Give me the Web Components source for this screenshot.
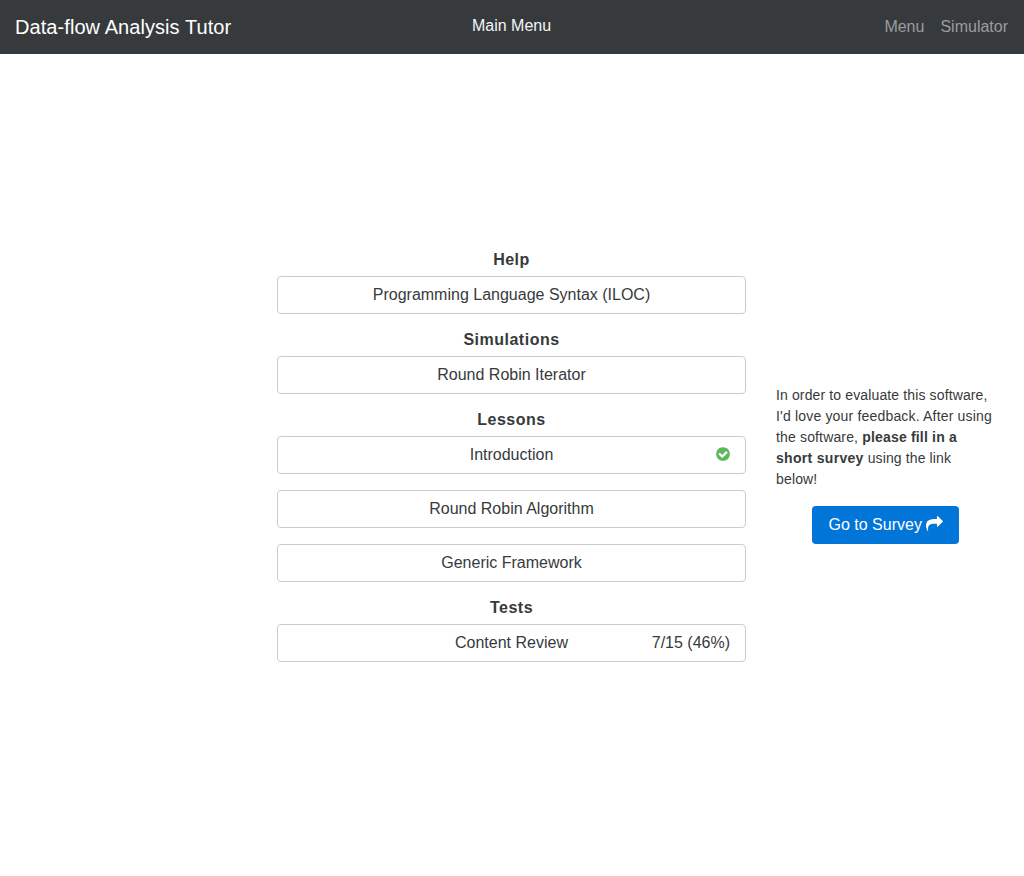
<!DOCTYPE html>
<html lang="en">
<head>
<meta charset="utf-8">
<title>Data-flow Analysis Tutor</title>
<style>
html, body { margin: 0; height: 100%; }
body { font: 16px/24px "Liberation Sans", Arial, sans-serif; color: #373a3c; background: #fff; overflow: hidden; }
</style>
</head>
<body>
<tutor-app></tutor-app>
<script>
const define = (name, html) => customElements.define(name, class extends HTMLElement {
  constructor() {
    super();
    const t = document.createElement('template');
    t.innerHTML = html;
    this.attachShadow({ mode: 'open' }).append(t.content.cloneNode(true));
  }
});

define('nav-bar', `
<style>
:host { display: grid; grid-template-columns: 1fr auto 1fr; box-sizing: border-box; height: 54px; padding: 0 16px 0 15px; background: #373a3c; color: #fff; }
.brand { font-size: 20px; line-height: 30px; padding-top: 12px; letter-spacing: .07px; }
.title { padding-top: 14px; color: #f4f5f5; }
.links { display: flex; gap: 16px; justify-content: flex-end; padding-top: 15px; color: #9b9c9d; }
</style>
<div class="brand"><slot name="brand"></slot></div>
<div class="title"><slot></slot></div>
<div class="links"><slot name="links"></slot></div>`);

define('menu-section', `
<style>
:host { display: block; }
h2 { font-size: 16px; line-height: 18px; margin: 0; padding: 1px 0 7px; text-align: center; font-weight: bold; letter-spacing: .5px; }
</style>
<h2><slot name="title"></slot></h2>
<slot></slot>`);

define('menu-item', `
<style>
:host { display: grid; grid-template-columns: 1fr auto 1fr; box-sizing: border-box; height: 38px; margin-bottom: 16px; padding: 6px 15px; border: 1px solid #ccc; border-radius: 4px; background: #fff; cursor: pointer; }
.label { grid-column: 2; white-space: nowrap; }
.status { grid-column: 3; justify-self: end; }
</style>
<span class="label"><slot></slot></span><span class="status"><slot name="status"></slot></span>`);

define('check-icon', `
<style>:host { display: block; height: 24px; color: #5cb85c; } svg { display: block; margin: 3.4px -1px 0 0; }</style>
<svg width="16" height="16" viewBox="0 0 1792 1792" fill="currentColor"><path d="M1412 734q0-28-18-46l-91-90q-19-19-45-19t-45 19l-408 407-226-226q-19-19-45-19t-45 19l-91 90q-18 18-18 46 0 27 18 45l362 362q19 19 45 19 27 0 46-19l543-543q18-18 18-45zm252 162q0 209-103 385.5t-279.5 279.5-385.5 103-385.5-103-279.5-279.5-103-385.5 103-385.5 279.5-279.5 385.5-103 385.5 103 279.5 279.5 103 385.5z"/></svg>`);

define('share-icon', `
<style>:host { display: block; } svg { display: block; }</style>
<svg width="17" height="15" viewBox="0 64 1792 1600" preserveAspectRatio="none" fill="currentColor"><path d="M1792 640q0 26-19 45l-512 512q-19 19-45 19t-45-19-19-45v-256h-224q-98 0-175.5 6t-154 21.5-133 42.5-105.5 69.5-80 101-48.5 138.5-17.5 181q0 55 5 123 0 6 2.5 23.5t2.5 26.5q0 15-8.5 25t-23.5 10q-16 0-28-17-7-9-13-22t-13.5-30-10.5-24q-127-285-127-451 0-199 53-333 162-403 875-403h224v-256q0-26 19-45t45-19 45 19l512 512q19 19 19 45z"/></svg>`);

define('survey-panel', `
<style>
:host { display: block; font-size: 14px; line-height: 21px; }
p { margin: 0 0 16px; white-space: nowrap; letter-spacing: .155px; }
.action { display: flex; justify-content: center; }
a { display: flex; gap: 4px; box-sizing: border-box; width: 147px; height: 38px; padding: 7px 0 7px 16.5px; border-radius: 4px; background: #0275d8; color: #fff; font-size: 16px; line-height: 24px; white-space: nowrap; }
share-icon { margin-top: 3.5px; }
</style>
<p><slot></slot></p>
<div class="action"><a><slot name="action"></slot><share-icon></share-icon></a></div>`);

define('tutor-app', `
<style>
:host { display: flex; flex-direction: column; height: 876px; }
main { flex: 1; display: grid; grid-template-columns: 277px 469px 219px; align-items: center; padding-bottom: 2px; }
.menu { grid-column: 2; }
survey-panel { grid-column: 3; margin-left: 30px; margin-right: -30px; }
.first { letter-spacing: .13px; }
.second { letter-spacing: .18px; }
b { letter-spacing: .18px; }
.lead b { letter-spacing: .3px; }
.lead { letter-spacing: .12px; }
[slot=action] { letter-spacing: 0; }
</style>
<nav-bar>
  <span slot="brand">Data-flow Analysis Tutor</span>
  <span>Main Menu</span>
  <span slot="links">Menu</span><span slot="links">Simulator</span>
</nav-bar>
<main>
  <div class="menu">
    <menu-section><span slot="title">Help</span>
      <menu-item>Programming Language Syntax (ILOC)</menu-item>
    </menu-section>
    <menu-section><span slot="title">Simulations</span>
      <menu-item>Round Robin Iterator</menu-item>
    </menu-section>
    <menu-section><span slot="title">Lessons</span>
      <menu-item>Introduction<check-icon slot="status"></check-icon></menu-item>
      <menu-item>Round Robin Algorithm</menu-item>
      <menu-item>Generic Framework</menu-item>
    </menu-section>
    <menu-section><span slot="title">Tests</span>
      <menu-item>Content Review<span slot="status">7/15 (46%)</span></menu-item>
    </menu-section>
  </div>
  <survey-panel>
    <span class="first">In order to evaluate this software,</span><br>
    <span class="second">I'd love your feedback. After using</span><br>
    <span>the software, <b>please fill in a</b></span><br>
    <span class="lead"><b>short survey</b> using the link</span><br>
    <span>below!</span>
    <span slot="action">Go to Survey</span>
  </survey-panel>
</main>`);
</script>
</body>
</html>
